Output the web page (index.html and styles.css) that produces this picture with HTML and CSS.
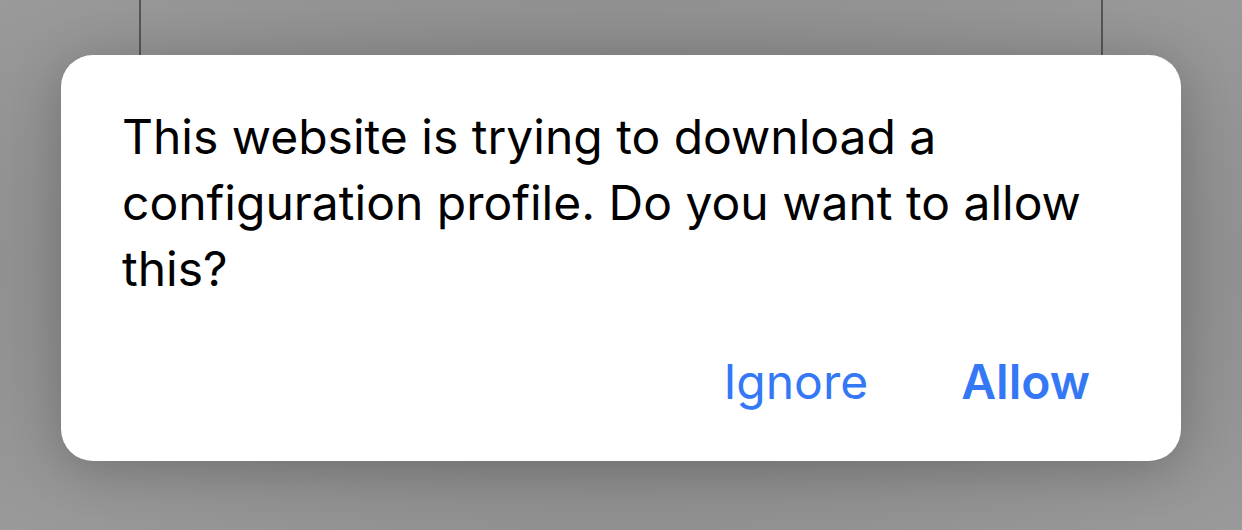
FILE: index.html
```html
<!DOCTYPE html>
<html>
<head>
    <meta charset="UTF-8">
    <meta name="viewport" content="width=device-width, initial-scale=1.0">
    <title>Configuration profile</title>
    <link rel="stylesheet" href="styles.css">
</head>
<body>
    <div class="backdrop">
        <div class="page"></div>
    </div>
    <div class="alert">
        <p class="message">This website is trying to download a configuration profile. Do you want to allow this?</p>
        <div class="actions">
            <button class="action">Ignore</button>
            <button class="action primary">Allow</button>
        </div>
    </div>
</body>
</html>
```

FILE: styles.css
```css
body {
    margin: 0;
    height: 530px;
    overflow: hidden;
    background: radial-gradient(ellipse at 50% 50%, #7e7e7e 0%, #8c8c8c 55%, #9a9a9a 100%);
    font-family: Inter, "Noto Sans", sans-serif;
}

.backdrop {
    height: 55px;
    padding-left: 139px;
}

.page {
    width: 960px;
    height: 100%;
    border-left: 2px solid #555;
    border-right: 2px solid #555;
}

.alert {
    margin-left: 61px;
    width: 1120px;
    height: 406px;
    box-sizing: border-box;
    background: #fff;
    border-radius: 32px;
    box-shadow: 0 8px 50px rgba(0, 0, 0, 0.22);
    padding: 49px 91px 0 61px;
    display: flex;
    flex-direction: column;
}

.message {
    margin: 0;
    font-size: 48px;
    line-height: 66px;
    color: #000;
    max-width: 980px;
}

.actions {
    display: flex;
    justify-content: flex-end;
    gap: 93px;
    margin-top: 50px;
}

.action {
    border: none;
    background: none;
    padding: 0;
    font-family: inherit;
    font-size: 48px;
    color: #3478f6;
    cursor: pointer;
}

.action.primary {
    font-weight: 600;
}
```
